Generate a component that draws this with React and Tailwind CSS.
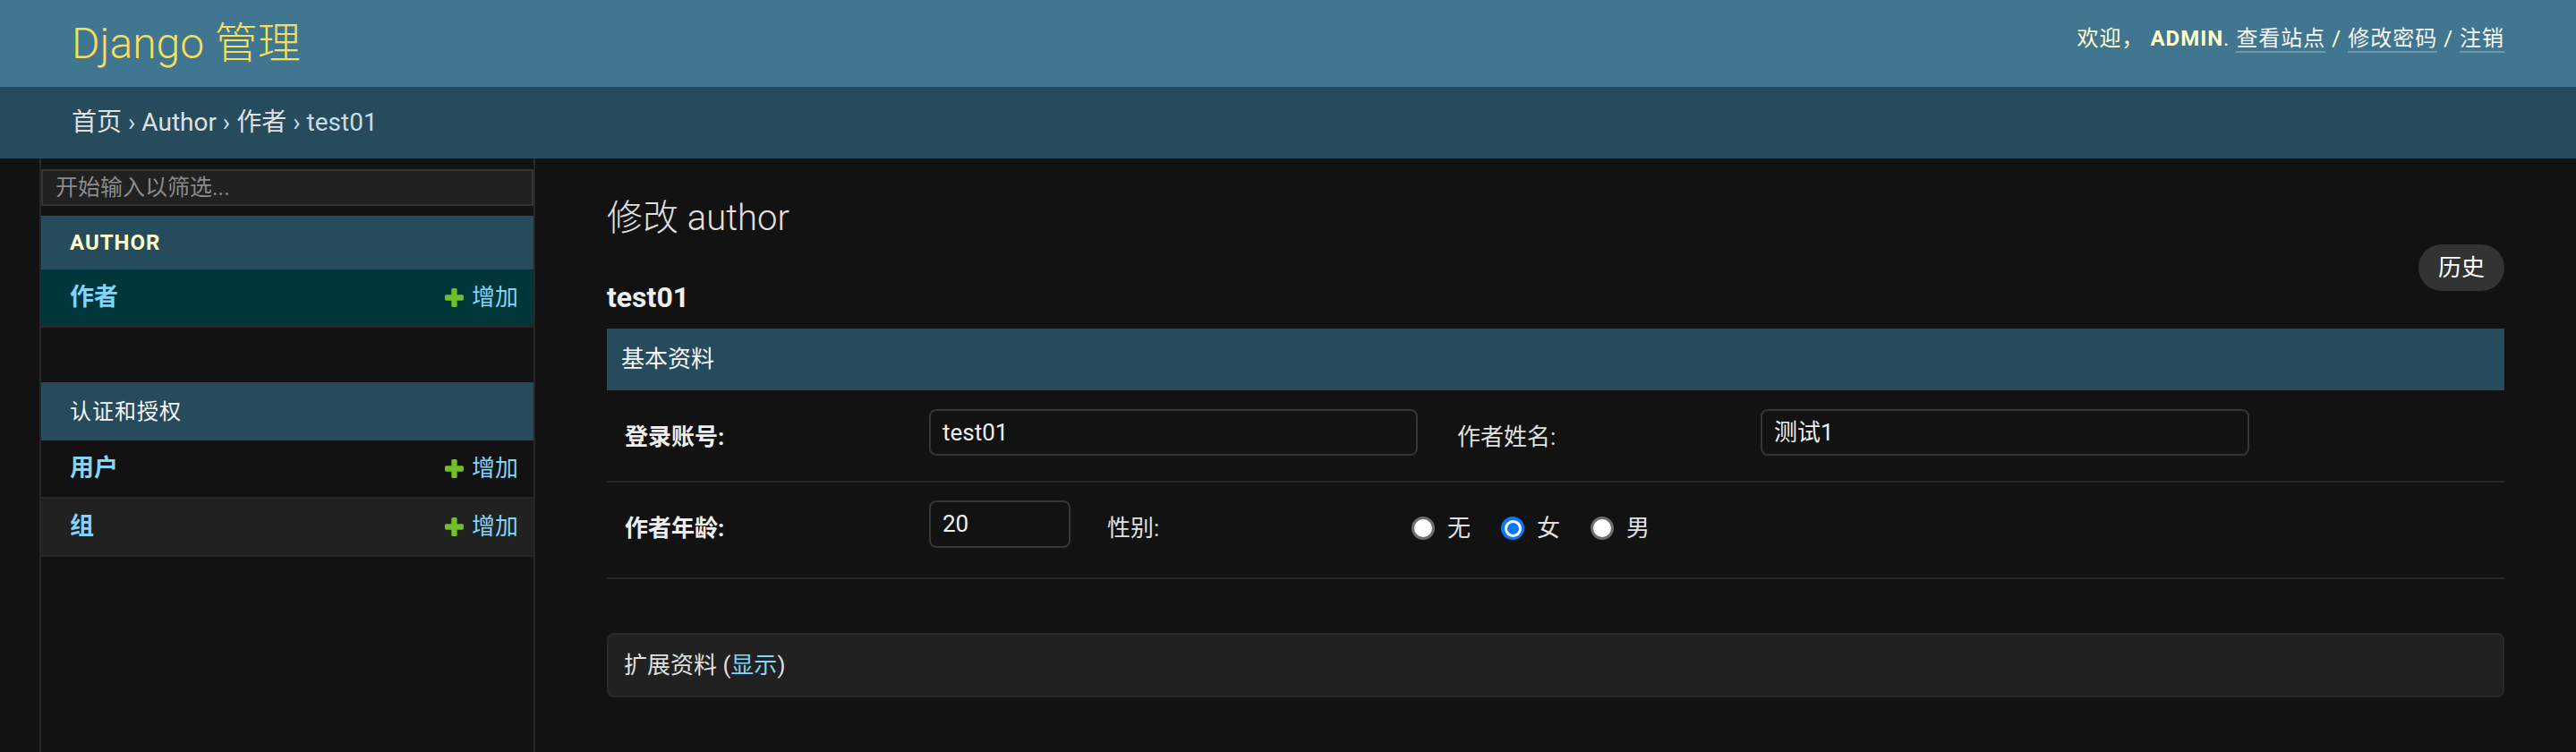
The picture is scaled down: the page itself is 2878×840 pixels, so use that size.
import React from "react";

function AddIcon() {
  return (
    <svg width="21" height="21" viewBox="0 0 20 20" className="mr-[9px] shrink-0">
      <rect x="7" y="0" width="6" height="20" rx="1.5" fill="#70bf2b" />
      <rect x="0" y="7" width="20" height="6" rx="1.5" fill="#70bf2b" />
    </svg>
  );
}

function AddLink() {
  return (
    <span className="flex items-center text-[26px] text-[#81d4fa]">
      <AddIcon />
      增加
    </span>
  );
}

function SideRow({ name, bg }) {
  return (
    <div
      className={`h-[65px] border-b-2 border-[#272727] flex items-center justify-between pl-[32px] pr-[17px] ${bg}`}
    >
      <span className="text-[27px] font-bold text-[#81d4fa]">{name}</span>
      <AddLink />
    </div>
  );
}

function Radio({ checked, label }) {
  return (
    <span className="flex items-center mr-[34px]">
      {checked ? (
        <span className="w-[26px] h-[26px] rounded-full bg-[#0c78f5] flex items-center justify-center">
          <span className="w-[19px] h-[19px] rounded-full bg-white flex items-center justify-center">
            <span className="w-[13px] h-[13px] rounded-full bg-[#0c78f5]" />
          </span>
        </span>
      ) : (
        <span className="w-[26px] h-[26px] rounded-full bg-white border-[3px] border-[#6e6e6e]" />
      )}
      <span className="ml-[14px] text-[26px] text-[#e0e0e0]">{label}</span>
    </span>
  );
}

export default function App() {
  return (
    <div className="min-h-screen bg-[#121212] text-[#eeeeee] font-[Roboto,'Noto_Sans_CJK_SC',sans-serif] flex flex-col">
      {/* Header */}
      <header className="h-[97px] shrink-0 bg-[#417690] flex items-center justify-between px-[80px]">
        <div className="text-[48px] font-light text-[#f5dd5d] leading-none">Django 管理</div>
        <div className="mb-[12px] text-[24px] tracking-[1px] text-[#ffffcc] leading-[34px] whitespace-nowrap">
          欢迎，{" "}
          <strong className="font-bold">ADMIN</strong>.{" "}
          <span className="text-[#f7f7f7] border-b-2 border-white/25">查看站点</span>
          {" / "}
          <span className="text-[#f7f7f7] border-b-2 border-white/25">修改密码</span>
          {" / "}
          <span className="text-[#f7f7f7] border-b-2 border-white/25">注销</span>
        </div>
      </header>

      {/* Breadcrumbs */}
      <div className="h-[80px] shrink-0 bg-[#264b5d] px-[80px] flex items-center text-[28px] text-[#c4dce8] whitespace-pre">
        <span className="text-[#e0e0e0]">首页</span>
        {" › "}
        <span className="text-[#e0e0e0]">Author</span>
        {" › "}
        <span className="text-[#e0e0e0]">作者</span>
        {" › test01"}
      </div>

      {/* Main */}
      <div className="flex flex-1">
        <div className="w-[46px] shrink-0 border-r-2 border-[#272727]" />

        <nav className="w-[552px] shrink-0 border-r-2 border-[#272727] pt-[2px]">
          <input
            readOnly
            placeholder="开始输入以筛选..."
            className="mt-[10px] block w-full h-[41px] border-2 border-[#353535] bg-[#212121] px-[14px] text-[25px] text-[#eeeeee] placeholder:text-[#8a8a8a] outline-none"
          />
          <div className="mt-[11px]">
            <div className="h-[60px] bg-[#264b5d] pl-[32px] flex items-center text-[24px] font-bold tracking-[1px] text-[#ffffcc]">
              AUTHOR
            </div>
            <SideRow name="作者" bg="bg-[#00363a]" />
          </div>
          <div className="mt-[61px]">
            <div className="h-[65px] bg-[#264b5d] pl-[32px] flex items-center text-[24px] tracking-[1px] text-[#f7f7f7]">
              认证和授权
            </div>
            <SideRow name="用户" bg="bg-[#121212]" />
            <SideRow name="组" bg="bg-[#212121]" />
          </div>
        </nav>

        <main className="flex-1 px-[80px] pt-[40px] pb-[40px]">
          <div className="flex items-start justify-between">
            <div>
              <h1 className="text-[40px] font-light leading-[54px] text-[#e0e0e0]">修改 author</h1>
              <h2 className="mt-[39px] text-[32px] font-bold leading-[44px] text-[#eeeeee]">test01</h2>
            </div>
            <div className="mt-[56px] h-[52px] px-[22px] rounded-full bg-[#333333] text-[26px] text-white flex items-center">
              历史
            </div>
          </div>

          <section className="mt-[13px]">
            <div className="h-[69px] bg-[#264b5d] pl-[16px] flex items-center text-[26px] text-[#f7f7f7]">
              基本资料
            </div>

            <div className="flex items-start pt-[21px] pb-[28px] pl-[20px] border-b-2 border-[#272727]">
              <div className="w-[340px] shrink-0 mt-[13px] leading-[36px] text-[26px] font-bold text-[#eeeeee]">登录账号:</div>
              <div className="w-[546px] h-[52px] shrink-0 border-2 border-[#363636] rounded-[8px] px-[13px] flex items-center text-[26px] text-[#eeeeee]">
                test01
              </div>
              <div className="ml-[44px] w-[339px] shrink-0 mt-[13px] leading-[36px] text-[26px] text-[#e0e0e0]">作者姓名:</div>
              <div className="w-[546px] h-[52px] shrink-0 border-2 border-[#363636] rounded-[8px] px-[13px] flex items-center text-[26px] text-[#eeeeee]">
                测试1
              </div>
            </div>

            <div className="flex items-start pt-[20px] pb-[33px] pl-[20px] border-b-2 border-[#272727]">
              <div className="w-[340px] shrink-0 mt-[13px] leading-[36px] text-[26px] font-bold text-[#eeeeee]">作者年龄:</div>
              <div className="w-[158px] h-[53px] shrink-0 border-2 border-[#363636] rounded-[8px] px-[13px] flex items-center text-[26px] text-[#eeeeee]">
                20
              </div>
              <div className="ml-[41px] w-[340px] shrink-0 mt-[13px] leading-[36px] text-[26px] text-[#e0e0e0]">性别:</div>
              <div className="mt-[13px] h-[36px] flex items-center">
                <Radio label="无" />
                <Radio label="女" checked />
                <Radio label="男" />
              </div>
            </div>
          </section>

          <section className="mt-[60px] h-[72px] border-2 border-[#2a2a2a] rounded-[8px] bg-[#212121] pl-[17px] flex items-center text-[26px] text-[#e0e0e0]">
            扩展资料 (<span className="text-[#81d4fa]">显示</span>)
          </section>

          <section className="mt-[61px] h-[69px] bg-[#264b5d]" />
        </main>
      </div>
    </div>
  );
}
